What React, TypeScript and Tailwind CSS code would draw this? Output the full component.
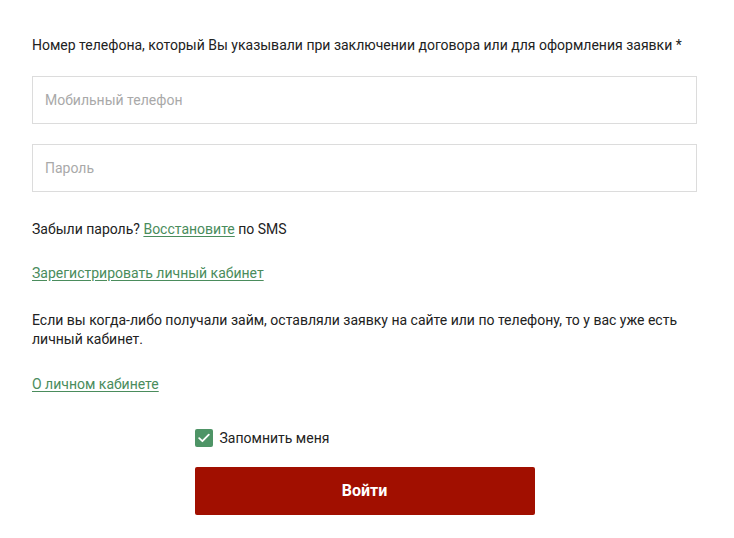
import React, { useState } from 'react'

export default function App() {
  const [remember, setRemember] = useState(true)

  return (
    <div className="min-h-screen bg-white text-[#222] text-[14px] leading-[20px]" style={{ fontFamily: 'Roboto, "Liberation Sans", sans-serif' }}>
      <form className="ml-[32px] w-[665px] pt-[35px]" onSubmit={(e) => e.preventDefault()}>
        <p>Номер телефона, который Вы указывали при заключении договора или для оформления заявки *</p>

        <input
          type="tel"
          placeholder="Мобильный телефон"
          className="mt-[21px] block w-full h-[48px] border border-[#dcdcdc] px-[12px] text-[14px] placeholder:text-[#a9a9a9] outline-none"
        />
        <input
          type="password"
          placeholder="Пароль"
          className="mt-[20px] block w-full h-[48px] border border-[#dcdcdc] px-[12px] text-[14px] placeholder:text-[#a9a9a9] outline-none"
        />

        <p className="mt-[27px]">
          Забыли пароль? <a href="#" className="text-[#4a8c5c] underline underline-offset-2">Восстановите</a> по SMS
        </p>

        <p className="mt-[24px]">
          <a href="#" className="text-[#4a8c5c] underline underline-offset-2">Зарегистрировать личный кабинет</a>
        </p>

        <p className="mt-[28px] leading-[19px]">
          Если вы когда-либо получали займ, оставляли заявку на сайте или по телефону, то у вас уже есть личный кабинет.
        </p>

        <p className="mt-[25px]">
          <a href="#" className="text-[#4a8c5c] underline underline-offset-2">О личном кабинете</a>
        </p>

        <div className="mx-auto w-[340px] mt-[34px]">
          <label className="flex items-center gap-[7px] cursor-pointer select-none">
            <span
              onClick={() => setRemember(!remember)}
              className={`w-[18px] h-[18px] rounded-[2px] flex items-center justify-center ${remember ? 'bg-[#4e9466]' : 'border border-[#ccc] bg-white'}`}
            >
              {remember && (
                <svg width="12" height="10" viewBox="0 0 12 10" fill="none">
                  <path d="M1.2 5.2 L4.4 8.2 L10.8 1.6" stroke="white" strokeWidth="1.8" strokeLinecap="round" strokeLinejoin="round" />
                </svg>
              )}
            </span>
            <span>Запомнить меня</span>
          </label>

          <button type="submit" className="mt-[19px] w-full h-[48px] bg-[#a10f00] rounded-[2px] text-white font-bold text-[16px]">
            Войти
          </button>
        </div>
      </form>
    </div>
  )
}
